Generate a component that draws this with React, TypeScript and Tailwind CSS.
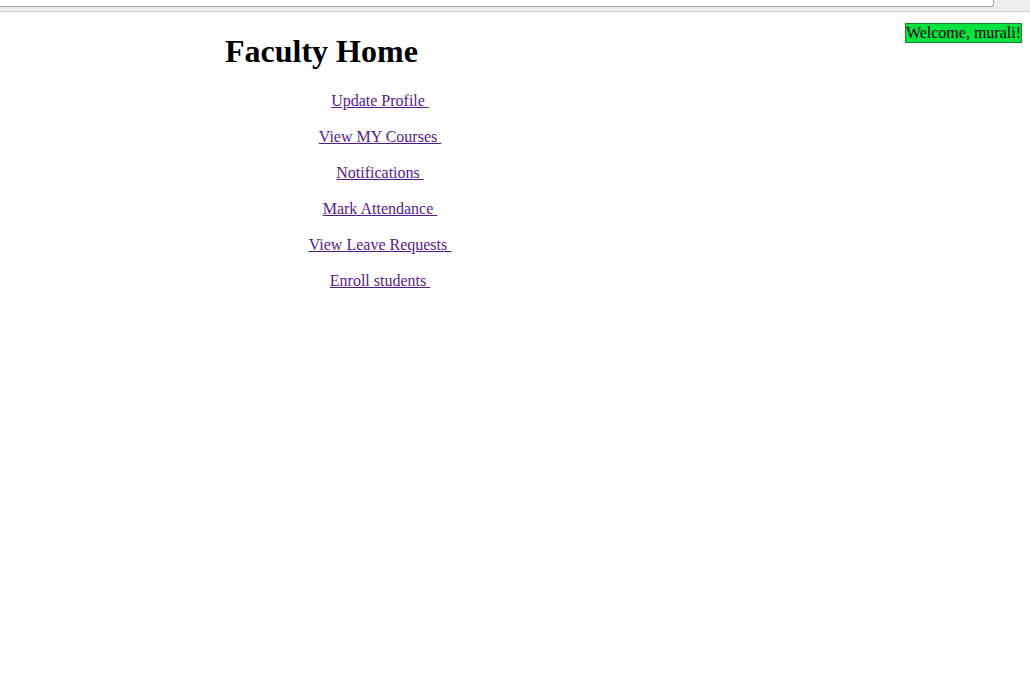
import React from 'react';

const links = [
  'Update Profile',
  'View MY Courses',
  'Notifications',
  'Mark Attendance',
  'View Leave Requests',
  'Enroll students',
];

export default function App() {
  return (
    <div className="min-h-screen bg-white font-['Liberation_Serif',serif] text-[16px] leading-[normal] text-black">
      {/* bit of browser chrome left at the top of the capture */}
      <div className="flex h-[12px] border-b border-[#cfcfcf] bg-[#ededed]">
        <div className="h-[7px] w-[994px] rounded-br-[3px] border-b border-r border-[#a3a3a3] bg-white" />
      </div>

      <div className="flex items-start justify-between">
        <div>
          <h1 className="ml-[225px] mt-[21px] text-[32px] font-bold">Faculty Home</h1>
          <div className="mt-[21.5px] flex w-[760px] flex-col items-center gap-[18px]">
            {links.map((label) => (
              <a key={label} href="#" className="leading-[18px] text-[#551a8b] underline">
                {label + '\u00a0'}
              </a>
            ))}
          </div>
        </div>
        <div className="mr-[8px] mt-[11px] border border-[#17842a] bg-[#06e23f] leading-[18px]">
          Welcome, murali!
        </div>
      </div>
    </div>
  );
}
